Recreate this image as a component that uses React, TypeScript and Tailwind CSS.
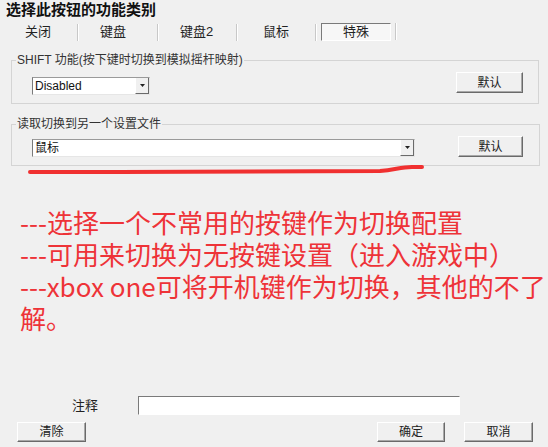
const ui = "font-['Liberation_Sans','Noto_Sans_CJK_SC',sans-serif]";

const Button = ({ label, className = '' }: { label: string; className?: string }) => (
  <button
    className={`flex items-center justify-center bg-[#f0f0f0] border border-t-white border-l-white border-r-[#6a6a6a] border-b-[#6a6a6a] shadow-[inset_-1px_-1px_0_#a8a8a8] text-[12px] text-[#222] ${className}`}
  >
    {label}
  </button>
);

const Combo = ({ value, className = '' }: { value: string; className?: string }) => (
  <div
    className={`flex items-stretch bg-white border border-t-[#9a9a9a] border-l-[#7a7a7a] border-r-[#e6e6e6] border-b-[#e6e6e6] ${className}`}
  >
    <span className="flex-1 pl-[2px] text-[12px] leading-[16px] text-[#111]">{value}</span>
    <span className="flex w-[14px] items-center justify-center bg-[#f0f0f0] border-r border-b border-[#6a6a6a] border-l border-l-white">
      <svg width="5" height="3" viewBox="0 0 5 3">
        <path d="M0 0h5L2.5 3z" fill="#222" />
      </svg>
    </span>
  </div>
);

const Sep = () => <span className="h-[17px] w-[2px] border-l border-l-[#c8c8c8] border-r border-r-white" />;

const Tab = ({ label, w, pl }: { label: string; w: string; pl: string }) => (
  <span className={`${w} ${pl} text-[13px] leading-[18px] text-[#222]`}>{label}</span>
);

export default function App() {
  return (
    <div className={`relative flex h-[447px] w-[548px] flex-col overflow-hidden bg-[#f0f0f0] ${ui}`}>
      <div className="pl-[6px] pt-[1px] text-[15px] font-bold leading-[18px] text-[#111]">选择此按钮的功能类别</div>

      <div className="mt-[4px] flex h-[18px] items-center">
        <Tab label="关闭" w="w-[77px]" pl="pl-[25px]" />
        <Sep />
        <Tab label="键盘" w="w-[78px]" pl="pl-[21px]" />
        <Sep />
        <Tab label="键盘2" w="w-[77px]" pl="pl-[21px]" />
        <Sep />
        <Tab label="鼠标" w="w-[77px]" pl="pl-[25px]" />
        <Sep />
        <span className="ml-[4px] flex h-[18px] w-[70px] items-center justify-center border border-t-[#7a7a7a] border-l-[#7a7a7a] border-r-white border-b-white bg-[#f7f7f7] text-[13px] text-[#222]">
          特殊
        </span>
        <span className="ml-[4px]">
          <Sep />
        </span>
      </div>

      <fieldset className="mx-[11px] mt-[12px] w-[528px] border border-[#d4d4d4] pb-[8px] pl-[20px] pr-[15px]">
        <legend className="ml-[-16px] px-[1px] text-[12px] leading-[14px] text-[#333]">
          SHIFT 功能(按下键时切换到模拟摇杆映射)
        </legend>
        <div className="mt-[5px] flex items-start">
          <Combo value="Disabled" className="mt-[5px] h-[18px] w-[118px]" />
          <Button label="默认" className="ml-auto h-[21px] w-[67px]" />
        </div>
      </fieldset>

      <fieldset className="mx-[11px] mt-[13px] w-[529px] border border-[#d4d4d4] pb-[8px] pl-[20px] pr-[16px]">
        <legend className="ml-[-16px] px-[1px] text-[12px] leading-[14px] text-[#333]">读取切换到另一个设置文件</legend>
        <div className="mt-[5px] flex items-start">
          <Combo value="鼠标" className="mt-[3px] h-[18px] w-[383px]" />
          <Button label="默认" className="ml-auto h-[21px] w-[65px]" />
        </div>
      </fieldset>

      <svg className="absolute left-0 top-[160px]" width="548" height="20" viewBox="0 160 548 20">
        <path
          d="M30 172 L120 172 L380 171 C395 170 400 167 412 167 L422 167"
          stroke="#f03030"
          strokeWidth="4"
          strokeLinecap="round"
          fill="none"
        />
      </svg>

      <div className="mt-[40px] pl-[20px] font-['Noto_Sans_CJK_SC',sans-serif] text-[26px] leading-[32px] text-[#ee3338] whitespace-nowrap">
        <div>---选择一个不常用的按键作为切换配置</div>
        <div>---可用来切换为无按键设置（进入游戏中）</div>
        <div>---xbox one可将开机键作为切换，其他的不了</div>
        <div>解。</div>
      </div>

      <div className="mt-auto flex items-center">
        <span className="ml-[72px] text-[13px] text-[#222]">注释</span>
        <span className="ml-[40px] h-[19px] w-[322px] border border-t-[#7a7a7a] border-l-[#7a7a7a] border-r-white border-b-white bg-white" />
      </div>

      <div className="mb-[5px] mt-[7px] flex">
        <Button label="清除" className="ml-[17px] h-[20px] w-[69px]" />
        <Button label="确定" className="ml-auto h-[20px] w-[68px]" />
        <Button label="取消" className="ml-[19px] mr-[15px] h-[20px] w-[69px]" />
      </div>
    </div>
  );
}
